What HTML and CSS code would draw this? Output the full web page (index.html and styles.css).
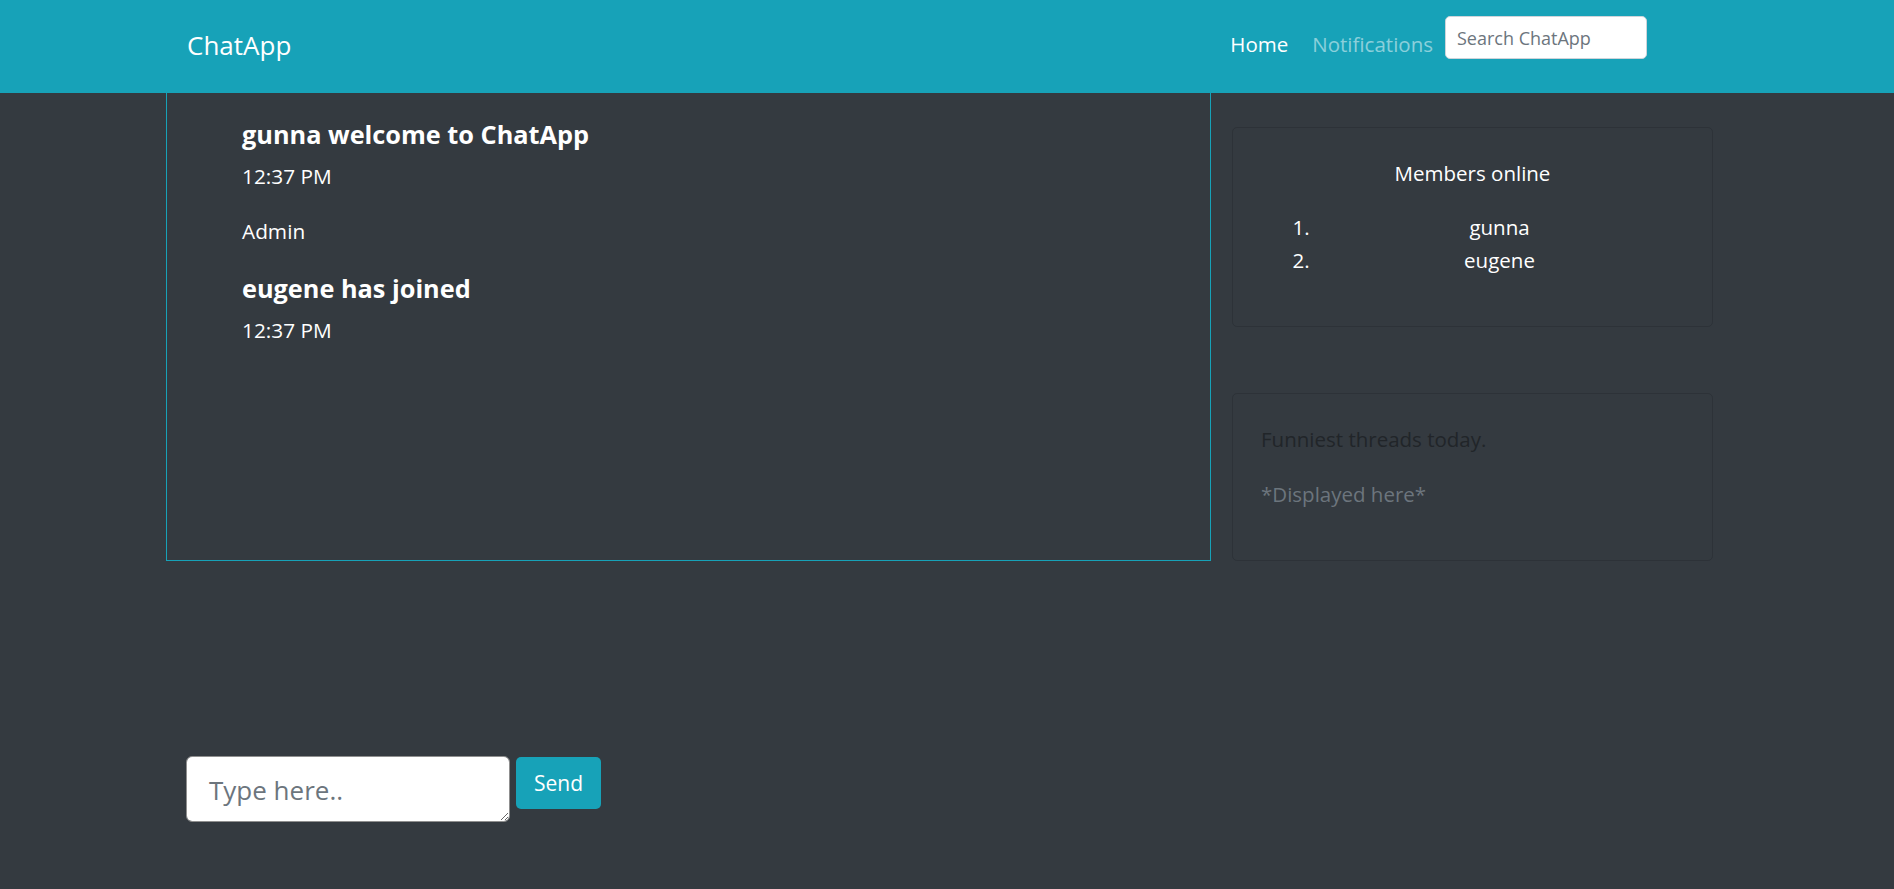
FILE: index.html
```html
<!DOCTYPE html>
<html lang="en">
<head>
<meta charset="utf-8">
<title>ChatApp</title>
<link rel="stylesheet" href="styles.css">
</head>
<body>
<header class="navbar">
  <div class="wrap nav-inner">
    <a class="brand" href="#">ChatApp</a>
    <nav class="nav-right">
      <a class="nav-link active" href="#">Home</a>
      <a class="nav-link" href="#">Notifications</a>
      <input class="search" type="text" placeholder="Search ChatApp">
    </nav>
  </div>
</header>
<main class="wrap">
  <div class="row">
    <section class="chat-box">
      <h4 class="msg-title">gunna welcome to ChatApp</h4>
      <p class="msg-time">12:37 PM</p>
      <p class="msg-author">Admin</p>
      <h4 class="msg-title">eugene has joined</h4>
      <p class="msg-time">12:37 PM</p>
    </section>
    <aside class="sidebar">
      <div class="card card-members">
        <h5 class="card-title">Members online</h5>
        <ol class="members">
          <li>gunna</li>
          <li>eugene</li>
        </ol>
      </div>
      <div class="card card-threads">
        <p class="lead">Funniest threads today.</p>
        <p class="muted">*Displayed here*</p>
      </div>
    </aside>
  </div>
  <form class="composer">
    <textarea class="msg-input" placeholder="Type here.."></textarea>
    <button class="send-btn" type="button">Send</button>
  </form>
</main>
</body>
</html>
```

FILE: styles.css
```css
* { box-sizing: border-box; }

html, body {
  margin: 0;
  padding: 0;
}

body {
  background: #343a40;
  color: #ffffff;
  font-family: "Open Sans", "Noto Sans", sans-serif;
  font-size: 20.5px;
  line-height: 30px;
  min-height: 889px;
}

.wrap {
  width: 1547px;
  margin-left: 166px;
}

/* Navbar */
.navbar {
  background: #17a2b8;
  height: 93px;
}

.nav-inner {
  display: flex;
  align-items: flex-start;
  padding-left: 21px;
  padding-right: 66px;
  height: 93px;
}

.brand {
  color: #ffffff;
  text-decoration: none;
  font-size: 26px;
  line-height: 36px;
  margin-top: 27px;
}

.nav-right {
  margin-left: auto;
  display: flex;
  align-items: flex-start;
}

.nav-link {
  color: rgba(255, 255, 255, 0.5);
  text-decoration: none;
  font-size: 20.5px;
  line-height: 30px;
  margin-top: 29px;
  margin-right: 24px;
}

.nav-link:nth-child(2) {
  margin-right: 12px;
}

.nav-link.active {
  color: #ffffff;
}

.search {
  width: 202px;
  height: 43px;
  margin-top: 16px;
  border: 1px solid #ced4da;
  border-radius: 5px;
  background: #ffffff;
  padding: 0 11px;
  font-family: "Open Sans", sans-serif;
  font-size: 18px;
  color: #495057;
  outline: none;
}

.search::placeholder {
  color: #6c757d;
}

/* Main row */
.row {
  display: flex;
  align-items: flex-start;
  gap: 21px;
}

.chat-box {
  width: 1045px;
  height: 469px;
  margin-top: -1px;
  border: 1px solid #17a2b8;
  padding: 26px 0 0 75px;
  font-size: 20.8px;
}

.msg-title {
  margin: 0 0 12px 0;
  font-size: 25.3px;
  font-weight: 700;
  line-height: 30px;
}

.msg-time {
  margin: 0 0 25px 0;
}

.msg-author {
  margin: 0 0 27px 0;
}

.sidebar {
  width: 481px;
  display: flex;
  flex-direction: column;
}

.card {
  border: 1px solid rgba(0, 0, 0, 0.125);
  border-radius: 5px;
}

.card-members {
  margin-top: 34px;
  height: 200px;
  padding: 30px 28px 0 28px;
}

.card-title {
  margin: 0 0 23px 0;
  font-size: 20.5px;
  font-weight: 400;
  line-height: 30px;
  text-align: center;
}

.members {
  margin: 0;
  padding-left: 54px;
}

.members li {
  text-align: center;
  line-height: 33px;
}

.card-threads {
  margin-top: 66px;
  height: 168px;
  padding: 30px 28px 0 28px;
}

.lead {
  margin: 0 0 25px 0;
  color: #212529;
}

.muted {
  margin: 0;
  color: #6c757d;
}

/* Composer */
.composer {
  display: flex;
  align-items: flex-start;
  gap: 6px;
  margin-top: 195px;
  padding-left: 20px;
}

.msg-input {
  width: 324px;
  height: 66px;
  border: 1px solid #8f8f8f;
  border-radius: 6px;
  padding: 15px 22px;
  font-family: "Open Sans", sans-serif;
  font-size: 26px;
  line-height: normal;
  color: #495057;
  background: #ffffff;
  outline: none;
}

.msg-input::placeholder {
  color: #6c757d;
}

.send-btn {
  width: 85px;
  height: 52px;
  margin-top: 1px;
  border: none;
  border-radius: 5px;
  background: #17a2b8;
  color: #ffffff;
  font-family: "Open Sans", sans-serif;
  font-size: 21px;
  padding: 0;
  cursor: pointer;
}
```
